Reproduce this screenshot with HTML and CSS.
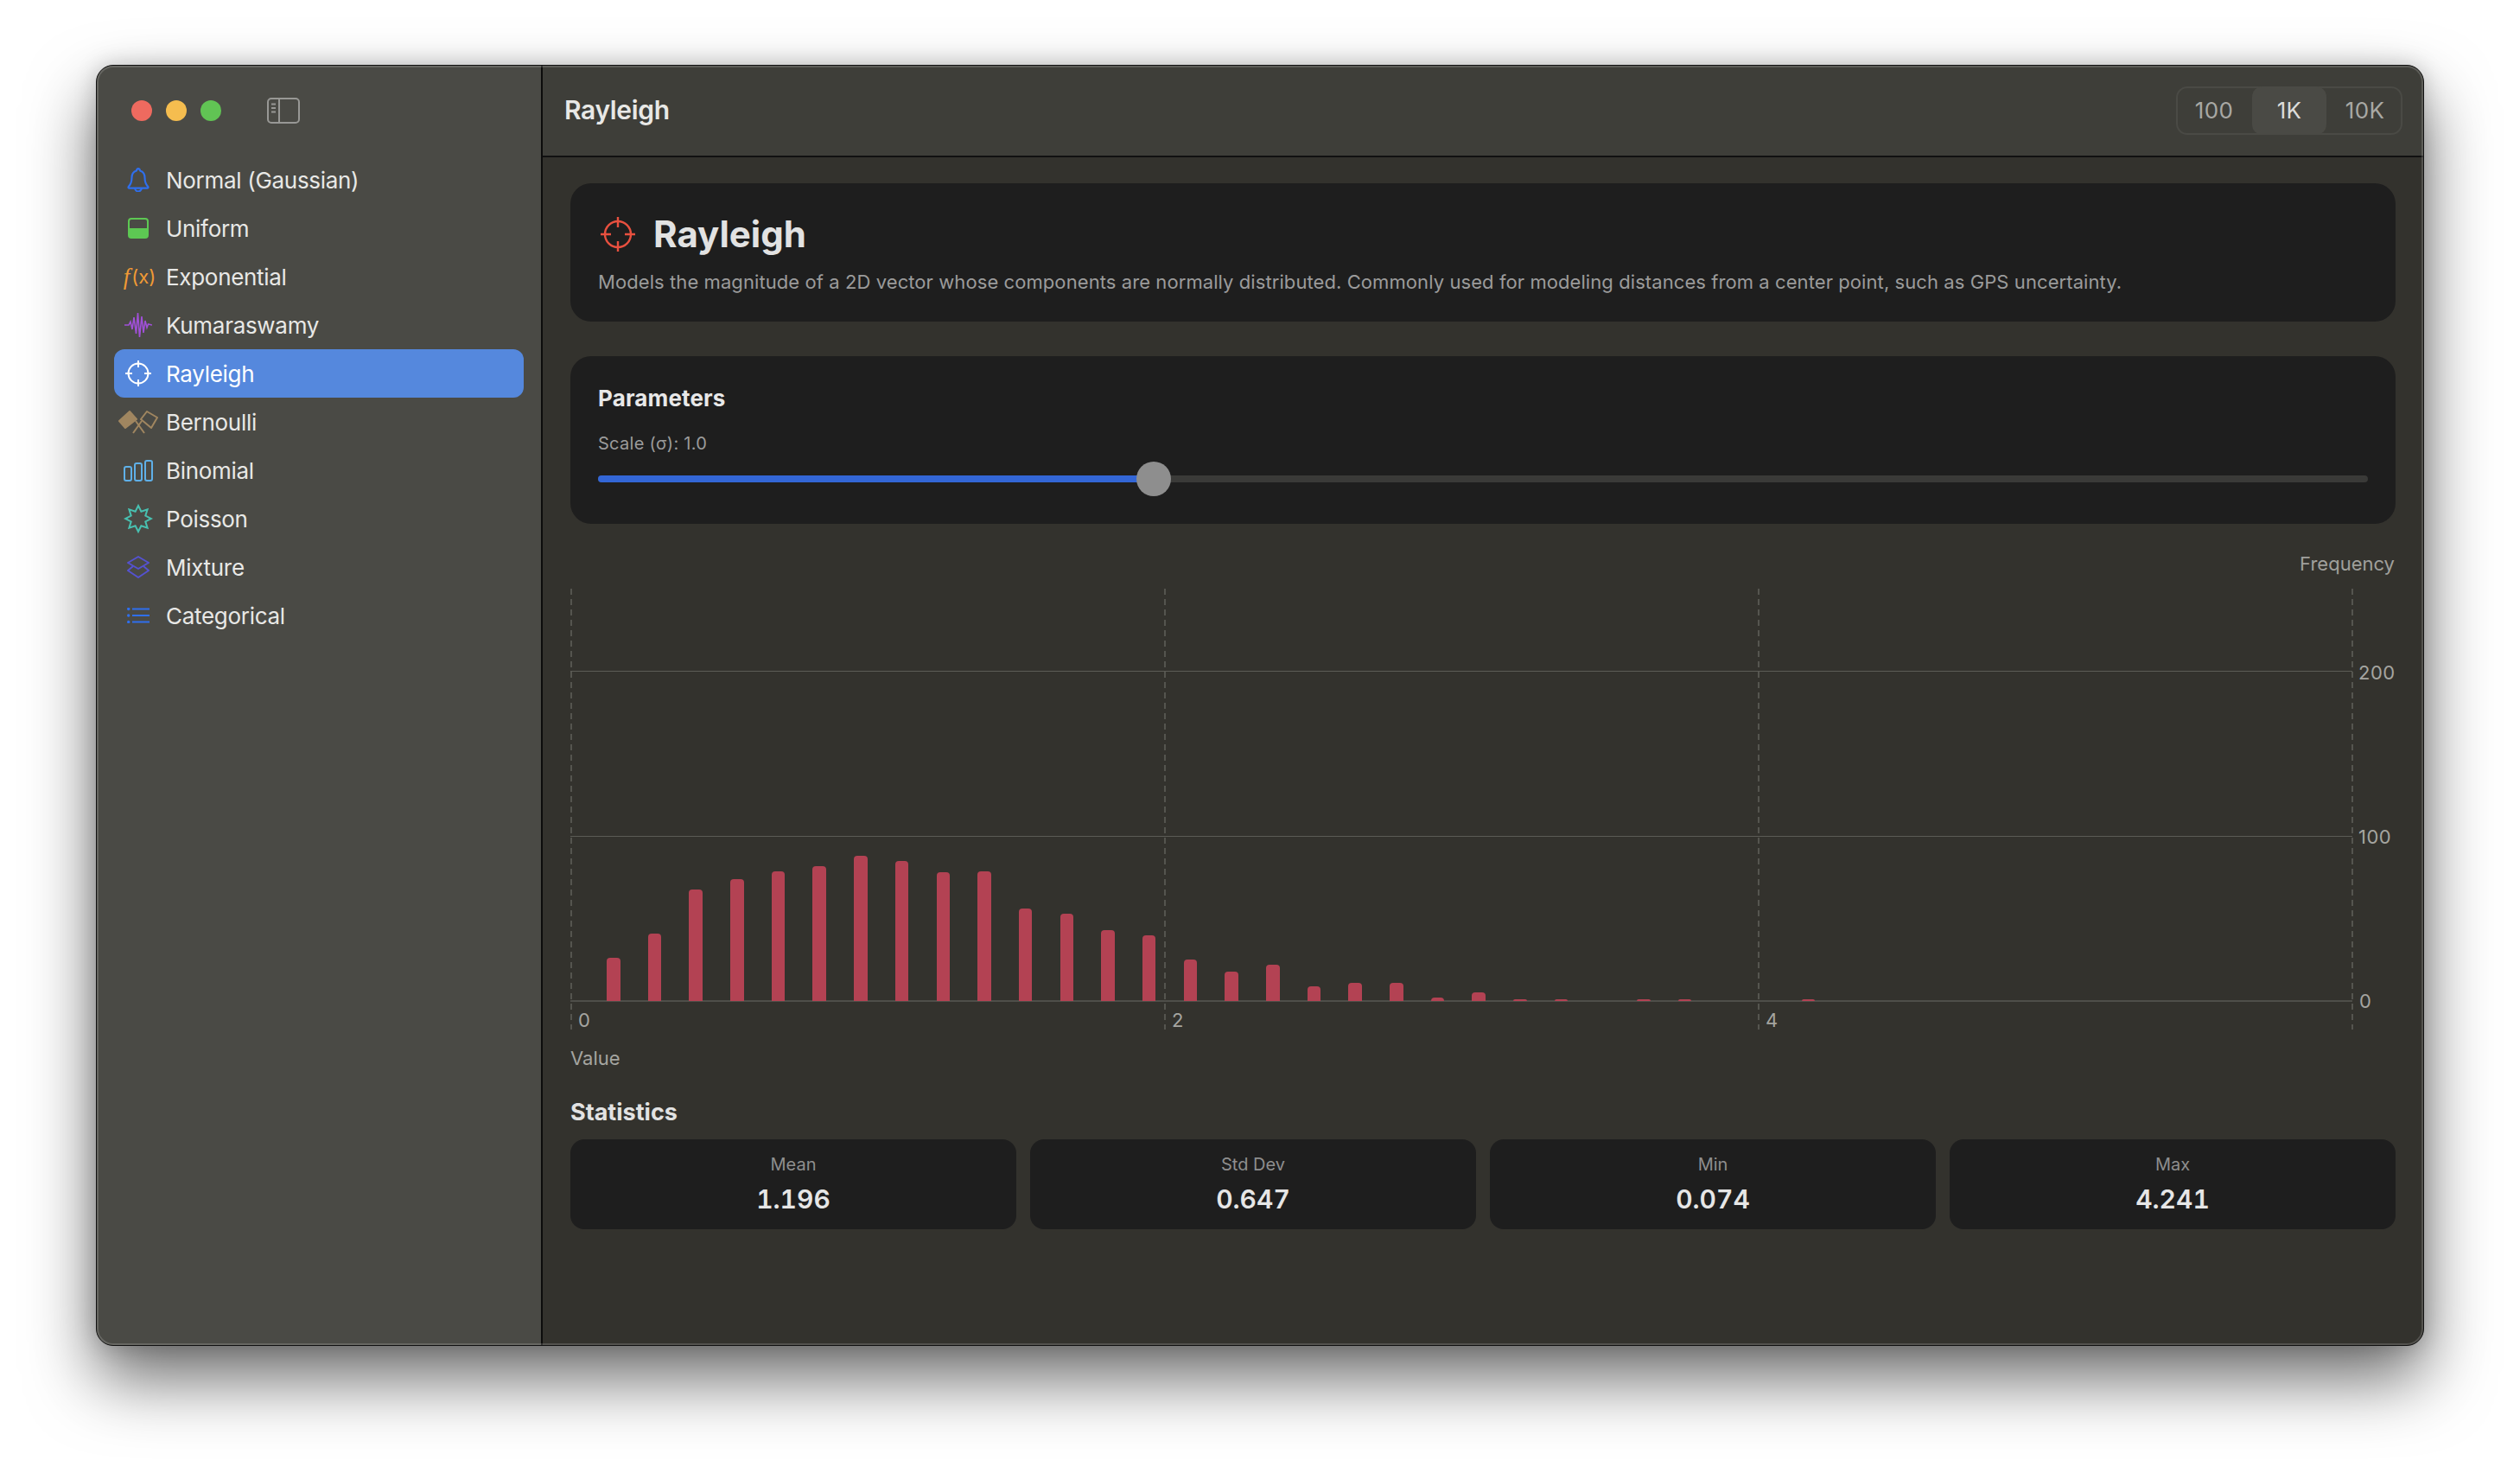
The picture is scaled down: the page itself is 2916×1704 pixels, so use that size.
FILE: index.html
```html
<!DOCTYPE html>
<html lang="en">
<head>
<meta charset="utf-8">
<title>Rayleigh</title>
<link rel="stylesheet" href="styles.css">
</head>
<body>
<div class="window">
  <aside class="sidebar">
    <div class="titlebar">
      <span class="light red"></span><span class="light yellow"></span><span class="light green"></span>
      <svg class="toggle" width="38" height="30" viewBox="0 0 38 30" fill="none" stroke="#989895" stroke-width="2"><rect x="1" y="1" width="36" height="28" rx="4"/><path d="M14 1V29M5 7.5H10M5 12H10M5 16.5H10" /></svg>
    </div>
    <nav class="nav">
      <div class="item"><span class="ico"><svg width="26" height="28" viewBox="0 0 24 26" fill="none" stroke="#2f6fed" stroke-width="2"><path d="M1.5 20.5C4 18 5 15.5 5 11C5 6.5 7.5 4 10 3.2C10.3 2 11 1 12 1C13 1 13.7 2 14 3.2C16.5 4 19 6.5 19 11C19 15.5 20 18 22.5 20.5C23 21.5 22.5 22 21.5 22H2.5C1.5 22 1 21.5 1.5 20.5Z"/><path d="M8.5 22a3.5 3.5 0 0 0 7 0"/></svg></span>Normal (Gaussian)</div>
      <div class="item"><span class="ico"><svg width="24" height="24" viewBox="0 0 24 24"><rect x="1" y="1" width="22" height="22" rx="3" fill="none" stroke="#5dc853" stroke-width="2"/><path d="M1 12H23V20a3 3 0 0 1-3 3H4a3 3 0 0 1-3-3Z" fill="#5dc853"/></svg></span>Uniform</div>
      <div class="item"><span class="ico fx"><i>f</i>(x)</span>Exponential</div>
      <div class="item"><span class="ico"><svg width="32" height="30" viewBox="0 0 32 30" fill="none" stroke="#a050d8" stroke-width="1.6"><polyline points="0,15 5,15 7,11 9,20 11,6 13.5,25 15.5,1 17.5,29 20,5 22,24 24,10 26,18 27.5,14 32,15"/></svg></span>Kumaraswamy</div>
      <div class="item active"><span class="ico"><svg width="32" height="32" viewBox="0 0 32 32" fill="none" stroke="#fff" stroke-width="2"><circle cx="16" cy="16" r="11.5"/><path d="M16 1V9M16 23V31M1 16H9M23 16H31"/></svg></span>Rayleigh</div>
      <div class="item"><span class="ico"><svg width="46" height="27" viewBox="0 0 46 27" fill="none" stroke="#a08660" stroke-width="2" stroke-linejoin="round"><path d="M1 12L13 1L21 10L8 20Z" fill="#a08660"/><path d="M20 12L30 26M27 12L17 26"/><path d="M33 1L45 8L38 20L26 10Z"/></svg></span>Bernoulli</div>
      <div class="item"><span class="ico"><svg width="34" height="25" viewBox="0 0 34 25" fill="none" stroke="#5fb0e8" stroke-width="2"><rect x="1" y="8" width="8" height="16" rx="2"/><rect x="13" y="4" width="8" height="20" rx="2"/><rect x="25" y="1" width="8" height="23" rx="2"/></svg></span>Binomial</div>
      <div class="item"><span class="ico"><svg width="34" height="34" viewBox="0 0 34 34" fill="none" stroke="#48c0b0" stroke-width="2" stroke-linejoin="miter"><polygon points="17,2 20.4,8.7 27.6,6.4 25.3,13.6 32,17 25.3,20.4 27.6,27.6 20.4,25.3 17,32 13.6,25.3 6.4,27.6 8.7,20.4 2,17 8.7,13.6 6.4,6.4 13.6,8.7"/></svg></span>Poisson</div>
      <div class="item"><span class="ico"><svg width="26" height="26" viewBox="0 0 26 26" fill="none" stroke="#5552d0" stroke-width="2" stroke-linejoin="round"><path d="M13 1L25 8L13 15L1 8Z"/><path d="M7 12L1 17L13 25L25 17L19 12"/></svg></span>Mixture</div>
      <div class="item"><span class="ico"><svg width="26" height="18" viewBox="0 0 26 18" fill="none" stroke="#2f6fed" stroke-width="2"><path d="M6 1.5H26M6 9H26M6 16.5H26"/><g fill="#2f6fed" stroke="none"><circle cx="1.7" cy="1.5" r="1.7"/><circle cx="1.7" cy="9" r="1.7"/><circle cx="1.7" cy="16.5" r="1.7"/></g></svg></span>Categorical</div>
    </nav>
  </aside>
  <main class="main">
    <header class="header">
      <h1 class="header-title">Rayleigh</h1>
      <div class="segment"><span>100</span><span class="on">1K</span><span>10K</span></div>
    </header>
    <div class="content">
      <section class="card intro">
        <div class="intro-head">
          <svg class="intro-icon" width="40" height="40" viewBox="0 0 40 40" fill="none" stroke="#e8503f" stroke-width="2.4"><circle cx="20" cy="20" r="15"/><path d="M20 0V12M20 28V40M0 20H12M28 20H40"/></svg>
          <h2 class="intro-title">Rayleigh</h2>
        </div>
        <p class="intro-text">Models the magnitude of a 2D vector whose components are normally distributed. Commonly used for modeling distances from a center point, such as GPS uncertainty.</p>
      </section>
      <section class="card params">
        <h3 class="params-title">Parameters</h3>
        <div class="params-label">Scale (σ): 1.0</div>
        <div class="slider">
          <div class="track"><div class="fill" style="width:31.4%"></div></div>
          <span class="thumb"></span>
        </div>
      </section>
      <section class="chart">
        <div class="y-title">Frequency</div>
        <div class="plot">
          <span class="hline h200"></span><span class="hline h100"></span><span class="hline h0"></span>
          <span class="vline v0"></span><span class="vline v2"></span><span class="vline v4"></span><span class="vline v6"></span>
          <div class="bars">
            <b style="height:50px"></b><b style="height:78px"></b><b style="height:129px"></b><b style="height:141px"></b><b style="height:150px"></b><b style="height:156px"></b><b style="height:168px"></b><b style="height:162px"></b><b style="height:149px"></b><b style="height:150px"></b><b style="height:107px"></b><b style="height:101px"></b><b style="height:82px"></b><b style="height:76px"></b><b style="height:48px"></b><b style="height:34px"></b><b style="height:42px"></b><b style="height:17px"></b><b style="height:21px"></b><b style="height:21px"></b><b style="height:4px"></b><b style="height:10px"></b><b style="height:2px"></b><b style="height:2px"></b><b style="height:0"></b><b style="height:2px"></b><b style="height:2px"></b><b style="height:0"></b><b style="height:0"></b><b style="height:2px"></b>
          </div>
          <span class="tick x0">0</span><span class="tick x2">2</span><span class="tick x4">4</span>
          <span class="tick y200">200</span><span class="tick y100">100</span><span class="tick y0">0</span>
        </div>
        <div class="x-title">Value</div>
      </section>
      <section class="stats">
        <h3 class="stats-title">Statistics</h3>
        <div class="stats-grid">
          <div class="stat"><div class="stat-label">Mean</div><div class="stat-value">1.196</div></div>
          <div class="stat"><div class="stat-label">Std Dev</div><div class="stat-value">0.647</div></div>
          <div class="stat"><div class="stat-label">Min</div><div class="stat-value">0.074</div></div>
          <div class="stat"><div class="stat-label">Max</div><div class="stat-value">4.241</div></div>
        </div>
      </section>
    </div>
  </main>
</div>
</body>
</html>
```
FILE: styles.css
```css
* { box-sizing: border-box; }
html, body { margin: 0; height: 100%; }
body {
  background: #fff;
  padding: 75px 0 0 111px;
  overflow: hidden;
  font-family: Inter, "Liberation Sans", sans-serif;
  color: #e6e6e6;
}
h1, h2, h3, p { margin: 0; }

.window {
  position: relative;
  width: 2694px;
  height: 1482px;
  display: flex;
  border: 1px solid #111;
  border-radius: 20px;
  overflow: hidden;
  box-shadow: 0 38px 78px rgba(0,0,0,.58), 0 0 26px rgba(0,0,0,.18);
  background: #33322d;
}
.window::after {
  content: "";
  position: absolute;
  inset: 0;
  border: 2px solid rgba(255,255,255,.16);
  border-radius: 19px;
  pointer-events: none;
}

.sidebar {
  width: 516px;
  flex: none;
  background: #4a4a45;
  border-right: 2px solid #0c0c0c;
  padding: 0 20px;
}
.titlebar {
  height: 104px;
  display: flex;
  align-items: center;
  padding: 0 0 0 20px;
  gap: 16px;
}
.light { width: 24px; height: 24px; border-radius: 50%; }
.red { background: #ee6a5f; }
.yellow { background: #f5bd4f; }
.green { background: #61c454; }
.toggle { margin-left: 37px; }

.nav { display: flex; flex-direction: column; }
.item {
  height: 56px;
  display: flex;
  align-items: center;
  gap: 8px;
  padding-left: 4px;
  border-radius: 12px;
  font-size: 26px;
  letter-spacing: -0.3px;
  color: #e8e8e6;
}
.item.active { background: #5588dd; color: #fff; }
.ico { width: 48px; display: flex; justify-content: center; align-items: center; flex: none; }
.fx { color: #f09a35; font-size: 22px; letter-spacing: 0; padding-left: 3px; }
.fx i { font-family: "Liberation Serif", serif; font-size: 27px; margin-right: 2px; }

.main { flex: 1; min-width: 0; display: flex; flex-direction: column; }
.header {
  height: 106px;
  flex: none;
  display: flex;
  align-items: center;
  justify-content: space-between;
  padding: 0 24px 0 25px;
  background: #3e3e39;
  border-bottom: 2px solid #111;
}
.header-title { font-size: 30px; font-weight: 600; letter-spacing: -0.35px; color: #e8e8e6; margin-top: -2px; }
.segment {
  width: 262px;
  height: 56px;
  display: grid;
  grid-template-columns: 1fr 1fr 1fr;
  border: 2px solid #4a4a45;
  border-radius: 13px;
  font-size: 26px;
  letter-spacing: .3px;
  color: #a8a8a4;
}
.segment span { display: flex; align-items: center; justify-content: center; border-radius: 12px; margin: -2px 0; padding: 0 2px 2px 0; }
.segment .on { background: #4a4a45; color: #dcdcda; padding-right: 0; }
.segment span:last-child { padding: 0 0 2px 3px; }

.content { flex: 1; padding: 30px 32px 0; }
.card { background: #1e1e1e; border-radius: 24px; padding: 0 32px; }

.intro { height: 160px; padding-top: 29px; }
.intro-head { display: flex; align-items: center; height: 58px; gap: 21px; }
.intro-icon { margin-left: 3px; margin-top: 2px; }
.intro-title { font-size: 42px; font-weight: 700; color: #e2e2e2; }
.intro-text { font-size: 22px; line-height: 30px; margin-top: 12px; letter-spacing: .08px; color: #9b9b9b; }

.params { margin-top: 40px; height: 194px; padding-top: 33px; }
.params-title { font-size: 26px; line-height: 32px; font-weight: 700; letter-spacing: .15px; color: #e8e8e8; }
.params-label { font-size: 20px; line-height: 26px; margin-top: 23px; letter-spacing: .28px; color: #9b9b9b; }
.slider { position: relative; height: 40px; margin-top: 8px; display: flex; align-items: center; }
.track { flex: 1; height: 8px; border-radius: 4px; background: #3a3a38; overflow: hidden; }
.fill { height: 100%; background: #3366d6; }
.thumb { position: absolute; left: 623px; top: 0; width: 40px; height: 40px; border-radius: 50%; background: #8e8e8e; }

.chart { margin-top: 30px; }
.y-title { font-size: 22px; line-height: 32px; text-align: right; padding-right: 1px; color: #a0a09c; }
.plot { position: relative; height: 510px; margin-top: 13px; }
.hline { position: absolute; left: 0; width: 2062px; height: 1px; background: #5c5c56; }
.h200 { top: 95px; }
.h100 { top: 286px; }
.h0 { top: 476px; height: 2px; background: #4e4e49; }
.vline {
  position: absolute;
  top: 0;
  bottom: 0;
  width: 2px;
  background: repeating-linear-gradient(to bottom, #55554f 0 7px, transparent 7px 12px);
}
.v0 { left: 0; }
.v2 { left: 687px; }
.v4 { left: 1374px; }
.v6 { left: 2061px; }
.bars {
  position: absolute;
  left: 0;
  top: 0;
  height: 477px;
  display: flex;
  align-items: flex-end;
  gap: 32.2px;
  padding-left: 42px;
}
.bars b { width: 15.5px; background: #b34253; border-radius: 4px 4px 0 0; flex: none; }
.tick { position: absolute; font-size: 22px; line-height: 28px; letter-spacing: .5px; color: #a5a5a0; }
.x0 { left: 9px; top: 485px; }
.x2 { left: 696px; top: 485px; }
.x4 { left: 1383px; top: 485px; }
.y200 { left: 2069px; top: 83px; }
.y100 { left: 2069px; top: 273px; }
.y0 { left: 2070px; top: 463px; }
.x-title { font-size: 22px; line-height: 28px; margin-top: 19px; color: #a5a5a0; }

.stats { margin-top: 32px; }
.stats-title { font-size: 27px; line-height: 34px; font-weight: 700; color: #e2e2e2; }
.stats-grid { display: grid; grid-template-columns: repeat(4, 1fr); gap: 16px; margin-top: 14px; }
.stat { height: 104px; background: #1e1e1e; border-radius: 16px; padding-top: 16px; text-align: center; }
.stat-label { font-size: 20px; line-height: 26px; color: #8e8e8e; }
.stat-value { font-size: 30px; line-height: 40px; margin-top: 7px; font-weight: 600; font-feature-settings: "tnum"; color: #e6e6e6; }
```
